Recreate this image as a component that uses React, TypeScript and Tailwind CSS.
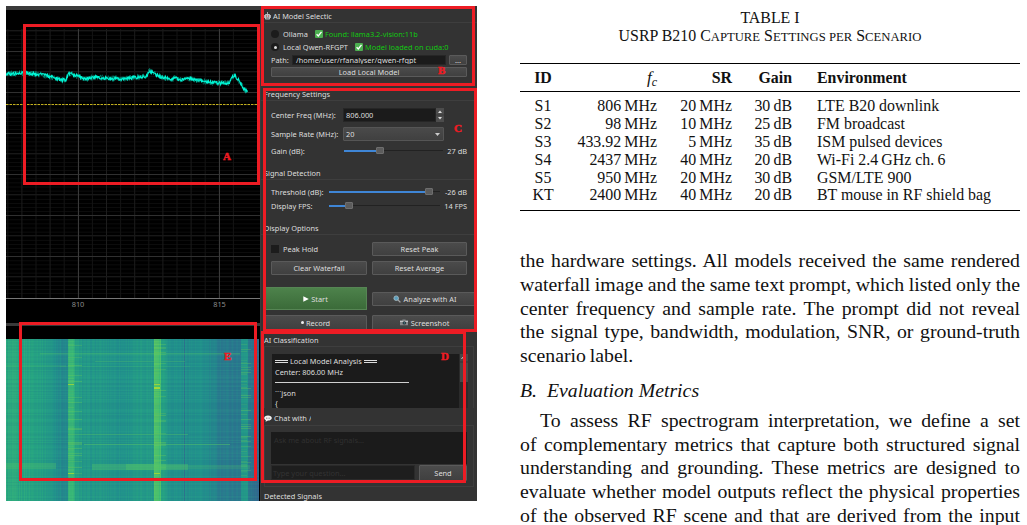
import type { ReactNode } from 'react';
import clsx from 'clsx';

const SCENARIOS = [
  { id: 'S1', fc: '806', sr: '20', gain: '30', env: 'LTE B20 downlink' },
  { id: 'S2', fc: '98', sr: '10', gain: '25', env: 'FM broadcast' },
  { id: 'S3', fc: '433.92', sr: '5', gain: '35', env: 'ISM pulsed devices' },
  { id: 'S4', fc: '2437', sr: '40', gain: '20', env: 'Wi-Fi 2.4\u2009GHz ch.\u20096' },
  { id: 'S5', fc: '950', sr: '20', gain: '30', env: 'GSM/LTE 900' },
  { id: 'KT', fc: '2400', sr: '40', gain: '20', env: 'BT mouse in RF shield bag' },
];

const HARDWARE_LINES = [
  'the hardware settings. All models received the same rendered',
  'waterfall image and the same text prompt, which listed only the',
  'center frequency and sample rate. The prompt did not reveal',
  'the signal type, bandwidth, modulation, SNR, or ground-truth',
  'scenario label.',
];

const METRIC_LINES = [
  'To assess RF spectrogram interpretation, we define a set',
  'of complementary metrics that capture both structured signal',
  'understanding and grounding. These metrics are designed to',
  'evaluate whether model outputs reflect the physical properties',
  'of the observed RF scene and that are derived from the input',
];

// repeatable noise, 0..1
function noise(n: number) {
  const s = Math.sin(n * 127.1 + 311.7) * 43758.5453;
  return s - Math.floor(s);
}

function lerp(points: number[][], x: number) {
  for (let i = 1; i < points.length; i++) {
    const [x0, y0] = points[i - 1];
    const [x1, y1] = points[i];
    if (x <= x1) return y0 + ((y1 - y0) * (x - x0)) / (x1 - x0);
  }
  return points[points.length - 1][1];
}

/* ---------- spectrum ---------- */

const TRACE = [
  [6, 74], [24, 73], [40, 74.5], [52, 77], [60, 80], [66, 80], [68, 74], [72, 74], [77, 76], [84, 79],
  [95, 77], [110, 78.5], [120, 79], [135, 77.5], [147, 76], [149, 71], [153, 71.5], [156, 75], [165, 78],
  [172, 79.5], [175, 77], [178, 80], [190, 78.5], [202, 81], [215, 83], [229, 83], [232, 77.5], [235, 76],
  [240, 82], [244, 89], [247.5, 92],
];

function tracePoints(step: number, amp: number, seed: number) {
  const pts: string[] = [];
  for (let x = 6; x <= 247.5; x += step) {
    const y = lerp(TRACE, x) + (noise(x * 3.7 + seed) - 0.5) * amp;
    pts.push(`${x.toFixed(1)},${y.toFixed(1)}`);
  }
  return pts.join(' ');
}

const range = (n: number) => Array.from({ length: n }, (_, i) => i);

function Spectrum() {
  return (
    <svg viewBox="6 10 254 313" className="block w-[254px] h-[313px] bg-black">
      {/* minor grid */}
      {range(65).map(i => (
        <rect key={i} x={6} y={30.8 + i * 4.1} width={254} height={0.8} fill="#101010" />
      ))}
      {range(17).map(i => (
        <rect key={i} x={7.3 + i * 14.1} y={29} width={1} height={269} fill={i % 2 ? '#1d1d1d' : '#151515'} />
      ))}
      {range(7).map(i => (
        <rect key={i} x={6} y={30 + i * 41} width={254} height={1} fill="#181818" />
      ))}
      {/* major grid */}
      {range(6).map(i => (
        <rect key={i} x={6} y={51 + i * 41} width={254} height={1} fill="#303030" />
      ))}
      <rect x={78} y={29} width={1} height={269} fill="#3a3a3a" />
      <rect x={219} y={29} width={1} height={269} fill="#3a3a3a" />
      <rect x={6} y={298} width={254} height={1} fill="#777" />
      <line x1={6} y1={104.5} x2={257} y2={104.5} stroke="#c4b11e" strokeWidth={1} strokeDasharray="2.5 1" />
      <polyline points={tracePoints(0.45, 6, 5)} fill="none" stroke="#078f78" strokeWidth={0.6} />
      <polyline points={tracePoints(0.5, 3.4, 1)} fill="none" stroke="#00f5d4" strokeWidth={1.1} />
      <text x={78} y={307} textAnchor="middle" className="font-['Noto_Sans'] text-[7.4px] fill-[#8c8c8c]">810</text>
      <text x={219.5} y={307} textAnchor="middle" className="font-['Noto_Sans'] text-[7.4px] fill-[#8c8c8c]">815</text>
    </svg>
  );
}

/* ---------- waterfall ---------- */

const LEVELS = [
  [6, 0.62], [35, 0.6], [48, 0.55], [60, 0.48], [67, 0.46], [68, 0.68], [74, 0.66], [74.5, 0.58], [81, 0.57],
  [82, 0.53], [100, 0.54], [122, 0.51], [140, 0.55], [153, 0.55], [154, 0.74], [160, 0.72], [160.5, 0.6],
  [166, 0.58], [167, 0.52], [183, 0.5], [190, 0.5], [204, 0.49], [220, 0.42], [240, 0.4], [241, 0.54],
  [247, 0.53], [248, 0.4], [255, 0.33], [259, 0.26],
];

const VIRIDIS = [
  [0.2, 59, 82, 139], [0.3, 49, 104, 142], [0.4, 42, 120, 142], [0.5, 33, 145, 140],
  [0.6, 38, 163, 130], [0.7, 62, 188, 116], [0.8, 122, 209, 81],
];

function viridis(v: number) {
  const ch = (k: number) => Math.round(lerp(VIRIDIS.map(s => [s[0], s[k]]), v));
  return `rgb(${ch(1)},${ch(2)},${ch(3)})`;
}

// broad bursts that span the capture
const BURSTS = [
  { x: 40, y: 353, w: 200, h: 1.5, o: 0.3 },
  { x: 95, y: 361, w: 90, h: 1, o: 0.3 },
  { x: 6, y: 365, w: 60, h: 2, o: 0.15 },
  { x: 60, y: 366, w: 130, h: 1, o: 0.15 },
  { x: 68, y: 434, w: 120, h: 1, o: 0.4 },
  { x: 84, y: 444, w: 146, h: 1, o: 0.5 },
  { x: 6, y: 463, w: 50, h: 6, o: 0.3 },
  { x: 92, y: 464, w: 96, h: 6, o: 0.35 },
  { x: 126, y: 464, w: 40, h: 6, o: 0.35 },
  { x: 160, y: 465, w: 90, h: 4, o: 0.2 },
];

const BANDS = [
  { x: 68, w: 6, tail: 14 },
  { x: 154, w: 6, tail: 12 },
  { x: 241, w: 6, tail: 10 },
];

function Waterfall() {
  return (
    <svg viewBox="6 339 253 162" className="block w-[253px] h-[162px]">
      {range(253).map(i => {
        const x = 6 + i;
        const v = x === 184 ? 0.36 : lerp(LEVELS, x) + (noise(i) - 0.5) * 0.05;
        return <rect key={i} x={x} y={339} width={1.1} height={162} fill={viridis(v)} />;
      })}
      {range(162).map(i => {
        const n = noise(i + 900);
        return <rect key={i} x={6} y={339 + i} width={253} height={1} fill={n > 0.5 ? '#3fd080' : '#1b4f80'} opacity={Math.abs(n - 0.5) * 0.17} />;
      })}
      {BANDS.map((b, k) =>
        range(140).map(i => {
          const n = noise(i * 3 + k * 50 + 11);
          if (n < 0.6) return null;
          return <rect key={`${k}-${i}`} x={b.x} y={341 + i} width={n > 0.85 ? b.tail : b.w} height={1} fill="#7ad151" opacity={(n - 0.55) * 0.7} />;
        })
      )}
      {BURSTS.map((b, i) => (
        <rect key={i} x={b.x} y={b.y} width={b.w} height={b.h} fill="#55c667" opacity={b.o} />
      ))}
      <rect x={154} y={387} width={6} height={2} fill="#b5de2b" opacity={0.8} />
      <rect x={68} y={384} width={6} height={1} fill="#b5de2b" opacity={0.7} />
      <rect x={154} y={384} width={6} height={1} fill="#b5de2b" opacity={0.7} />
      <rect x={68} y={473} width={6} height={1} fill="#b5de2b" opacity={0.7} />
      <rect x={154} y={473} width={6} height={1} fill="#b5de2b" opacity={0.7} />
    </svg>
  );
}

/* ---------- control panel ---------- */

function Title({ children, className }: { children: ReactNode; className: string }) {
  return <div className={clsx('flex items-center gap-[2px] pl-[3px] shrink-0', className)}>{children}</div>;
}

function Btn({ children, className }: { children: ReactNode; className?: string }) {
  return (
    <div className={clsx('flex items-center justify-center gap-[3px] border border-[#5a5a5a] bg-linear-to-b from-[#4b4b4b] to-[#404040] rounded-[1px] shrink-0', className)}>
      {children}
    </div>
  );
}

function SliderTrack({ fill, className }: { fill: string; className: string }) {
  return (
    <div className={clsx('flex items-center', className)}>
      <div className={clsx('h-[2px] bg-[#3f86d6]', fill)} />
      <div className="w-[8px] h-[7px] bg-[#5c5c5c] border border-[#6e6e6e] rounded-[1px]" />
      <div className="h-px flex-1 bg-[#222]" />
    </div>
  );
}

function CheckMark() {
  return (
    <svg viewBox="0 0 8 8" className="w-[8px] h-[8px] shrink-0">
      <rect width="8" height="8" rx="1" fill="#4caf50" />
      <path d="M1.6 4.2 3.3 6 6.5 1.8" fill="none" stroke="#fff" strokeWidth="1.3" />
    </svg>
  );
}

function Robot() {
  return (
    <svg viewBox="0 0 7 8" className="w-[7px] h-[8px] shrink-0">
      <path d="M3 0h1v2H3zM0 3h1v3H0zM6 3h1v3H6z" fill="#aaa" />
      <rect x="1" y="2" width="5" height="5.5" rx=".7" fill="#b9c0c4" />
      <path d="M2 3.4h1v1H2zM4 3.4h1v1H4z" fill="#b33" />
      <path d="M2 5.7h3v.7H2z" fill="#444" />
    </svg>
  );
}

function Magnifier() {
  return (
    <svg viewBox="0 0 8 8" className="w-[8px] h-[8px] shrink-0">
      <path d="m4.8 4.8 2.6 2.6" stroke="#a3a3a3" strokeWidth="1.3" />
      <circle cx="3.2" cy="3.2" r="2.3" fill="#5b9fbd" stroke="#a9bfc8" strokeWidth=".8" />
    </svg>
  );
}

function CameraIcon() {
  return (
    <svg viewBox="0 0 8 7" className="w-[8px] h-[7px] shrink-0">
      <path d="M0 1.2h2L2.6.4h2.8l.6.8h2v5H0z" fill="#85898b" />
      <path d="M0 2h8v1H0z" fill="#c2c6c8" />
      <circle cx="4.3" cy="3.9" r="1.7" fill="#222c31" />
      <circle cx="4.3" cy="3.9" r=".7" fill="#4f9dac" />
    </svg>
  );
}

function Bubble() {
  return (
    <svg viewBox="0 0 8 7" className="w-[8px] h-[7px] shrink-0">
      <path d="M4 .5c2.2 0 3.8 1 3.8 2.5S6.200 5.600 4 5.600L1.600 6.800 1.900 5.200C.8 4.700.2 4 .2 3 .2 1.500 1.800.5 4 .5Z" fill="#f4f4f4" />
      <path d="M2 2.700h.9v.8H2zM3.600 2.700h.9v.8h-.9zM5.200 2.700h.9v.8h-.9z" fill="#555" />
    </svg>
  );
}

function ControlPanel() {
  return (
    <div className="flex flex-col w-[216px] h-[495px] bg-[#333] text-[#dedede] font-['Noto_Sans',sans-serif] text-[7.4px] leading-[10px] whitespace-nowrap overflow-hidden">
      {/* model selection */}
      <Title className="h-[17px] pt-[3px] border-b border-[#3e3e3e]"><Robot />AI Model Selectic</Title>
      <div className="flex items-center h-[12px] mt-[5px] pl-[10px] shrink-0">
        <span className="w-[8px] h-[8px] rounded-full bg-[#1c1c1c]" />
        <span className="ml-[4px] w-[32px]">Ollama</span>
        <CheckMark />
        <span className="ml-[2px] text-[#12c812]">Found: llama3.2-vision:11b</span>
      </div>
      <div className="flex items-center h-[12px] mt-[1px] pl-[10px] shrink-0">
        <span className="w-[8px] h-[8px] rounded-full bg-[#1c1c1c] flex items-center justify-center">
          <span className="w-[3px] h-[3px] rounded-full bg-[#ddd]" />
        </span>
        <span className="ml-[4px] w-[72px]">Local Qwen-RFGPT</span>
        <CheckMark />
        <span className="ml-[2px] text-[#12c812]">Model loaded on cuda:0</span>
      </div>
      <div className="flex items-center h-[12px] mt-[1px] pl-[10px] shrink-0">
        <span className="w-[21px]">Path:</span>
        <div className="flex items-center w-[154px] h-[10px] pl-[3px] bg-[#1b1b1b] border border-[#262626] overflow-hidden">/home/user/rfanalyser/qwen-rfgpt</div>
        <Btn className="ml-[3px] w-[18px] h-[10px]">...</Btn>
      </div>
      <Btn className="mt-[1px] ml-[10px] w-[196px] h-[10px]">Load Local Model</Btn>

      {/* frequency */}
      <Title className="mt-[11px] h-[13px] border-b border-[#3e3e3e]">Frequency Settings</Title>
      <div className="flex items-center h-[14px] mt-[7px] pl-[10px] shrink-0">
        <span className="w-[72px]">Center Freq (MHz):</span>
        <div className="flex items-center w-[93px] h-[14px] pl-[2px] bg-[#1b1b1b] border border-[#262626]">806.000</div>
        <svg viewBox="0 0 8 14" className="w-[8px] h-[14px]">
          <rect width="8" height="14" fill="#4c4c4c" />
          <path d="M0 7h8" stroke="#333" strokeWidth=".7" />
          <path d="M2 5 4 2.500 6 5zM2 9l2 2.500L6 9z" fill="#ddd" />
        </svg>
      </div>
      <div className="flex items-center h-[14px] mt-[5px] pl-[10px] shrink-0">
        <span className="w-[72px]">Sample Rate (MHz):</span>
        <div className="flex items-center justify-between w-[101px] h-[14px] pl-[2px] pr-[3px] bg-linear-to-b from-[#4a4a4a] to-[#404040] border border-[#555] rounded-[1px]">
          20
          <svg viewBox="0 0 5 3" className="w-[5px] h-[3px]"><path d="M0 0h5L2.500 3z" fill="#ccc" /></svg>
        </div>
      </div>
      <div className="flex items-center h-[11px] mt-[4px] pl-[10px] pr-[10px] shrink-0">
        <span className="w-[73px]">Gain (dB):</span>
        <SliderTrack fill="w-[32px]" className="w-[99px]" />
        <span className="ml-auto">27 dB</span>
      </div>

      {/* detection */}
      <Title className="mt-[11px] h-[13px] border-b border-[#3e3e3e]">Signal Detection</Title>
      <div className="flex items-center h-[11px] mt-[6px] pl-[10px] pr-[10px] shrink-0">
        <span className="w-[58px]">Threshold (dB):</span>
        <SliderTrack fill="w-[96px]" className="w-[111px]" />
        <span className="ml-auto">-26 dB</span>
      </div>
      <div className="flex items-center h-[11px] mt-[3px] pl-[10px] pr-[10px] shrink-0">
        <span className="w-[58px]">Display FPS:</span>
        <SliderTrack fill="w-[16px]" className="w-[111px]" />
        <span className="ml-auto">14 FPS</span>
      </div>

      {/* display */}
      <Title className="mt-[10px] h-[14px] border-b border-[#3e3e3e]">Display Options</Title>
      <div className="flex items-center h-[14px] mt-[7px] pl-[10px] shrink-0">
        <span className="w-[8px] h-[8px] bg-[#1c1c1c]" />
        <span className="ml-[4px] w-[89px]">Peak Hold</span>
        <Btn className="w-[95px] h-[14px]">Reset Peak</Btn>
      </div>
      <div className="flex items-center h-[14px] mt-[5px] pl-[10px] gap-[5px] shrink-0">
        <Btn className="w-[96px] h-[14px]">Clear Waterfall</Btn>
        <Btn className="w-[95px] h-[14px]">Reset Average</Btn>
      </div>

      {/* actions */}
      <div className="flex items-center h-[23px] mt-[12px] pl-[3px] gap-[5px] shrink-0">
        <div className="flex items-center justify-center gap-[2px] w-[103px] h-[23px] bg-linear-to-b from-[#4d824b] to-[#3b6b39] border border-[#568554]">
          <svg viewBox="0 0 6 6" className="w-[6px] h-[6px]"><path d="M.3.3 5.800 3 .3 5.800z" fill="#fff" /></svg>
          Start
        </div>
        <Btn className="w-[105px] h-[14px]"><Magnifier />Analyze with AI</Btn>
      </div>
      <div className="flex items-center h-[15px] mt-[5px] pl-[3px] gap-[5px] shrink-0">
        <Btn className="w-[103px] h-[15px]"><span className="w-[3px] h-[3px] rounded-full bg-[#eee] -mr-[1px]" />Record</Btn>
        <Btn className="w-[105px] h-[15px]"><CameraIcon />Screenshot</Btn>
      </div>

      {/* classification log */}
      <Title className="mt-[3px] h-[13px]">AI Classification</Title>
      <div className="flex h-[62px] pt-[7px] pl-[7px] mx-[3px] border border-b-0 border-[#3e3e3e] shrink-0">
        <div className="w-[187px] h-[54px] px-[3px] pt-[2px] bg-[#1b1b1b] leading-[10.5px] overflow-hidden">
          <div className="flex items-center gap-[2px]">
            <span className="w-[13px] h-[3px] border-y border-[#ddd]" />
            Local Model Analysis
            <span className="w-[13px] h-[3px] border-y border-[#ddd]" />
          </div>
          <div>Center: 806.00 MHz</div>
          <div className="h-[10.500px] flex items-center"><span className="w-[134px] h-px bg-[#d0d0d0]" /></div>
          <div>```json</div>
          <div>{'{'}</div>
        </div>
        <div className="w-[9px] h-[54px] bg-[#2b2b2b]">
          <svg viewBox="0 0 9 28" className="block w-[9px] h-[28px]">
            <rect x="1" width="8" height="28" fill="#484848" />
            <path d="M2.500 5 4.500 2.500 6.500 5" fill="none" stroke="#ccc" />
            <path d="M1 8h8" stroke="#333" />
          </svg>
        </div>
      </div>

      {/* chat */}
      <Title className="mt-[3px] h-[14px]"><Bubble />Chat with <span className="w-[2px] overflow-hidden">/</span></Title>
      <div className="h-[62px] pt-[6px] pl-[6px] mx-[3px] border border-[#3e3e3e] shrink-0">
        <div className="w-[196px] h-[32px] pl-[3px] pt-[3px] bg-[#1b1b1b] text-[#303030]">Ask me about RF signals...</div>
        <div className="flex items-center h-[17px]">
          <div className="flex items-center w-[144px] h-[15px] pl-[1px] bg-[#1e1e1e] text-[#333] border border-[#2a2a2a]">Type your question...</div>
          <Btn className="ml-[4px] w-[48px] h-[16px]">Send</Btn>
        </div>
      </div>
      <Title className="mt-[3px] h-[12px]">Detected Signals</Title>
    </div>
  );
}

/* ---------- red callouts ---------- */

function Callout({ label, box, at }: { label: string; box: string; at: string }) {
  return (
    <>
      <div className={clsx('absolute border-[3px] border-[#ed1c24]', box)} />
      <span className={clsx("absolute font-['Liberation_Serif',serif] font-bold text-[11px] leading-[12px] text-[#ed1c24] [-webkit-text-stroke:0.5px_#ed1c24]", at)}>{label}</span>
    </>
  );
}

function Analyzer() {
  return (
    <div className="relative flex w-[471px] h-[495px] mt-[6px] ml-[6px] bg-[#333] shrink-0">
      <div className="w-[255px] pr-[1px] bg-[#3a3a3a]">
        <div className="h-[4px] bg-[#3a3a3a]" />
        <Spectrum />
        <div className="h-[3px] bg-[#3a3a3a]" />
        <div className="h-[13px] bg-black" />
        <div className="bg-black"><Waterfall /></div>
      </div>
      <ControlPanel />
      <Callout label="A" box="left-[17px] top-[18px] w-[237px] h-[161px]" at="left-[217px] top-[144px]" />
      <Callout label="B" box="left-[255px] top-0 w-[214px] h-[80px]" at="left-[432px] top-[58px]" />
      <Callout label="C" box="left-[257px] top-[82px] w-[214px] h-[244px]" at="left-[448px] top-[116px]" />
      <Callout label="D" box="left-[255px] top-[325px] w-[205px] h-[152px]" at="left-[435px] top-[344px]" />
      <Callout label="E" box="left-[13px] top-[316px] w-[238px] h-[159px]" at="left-[218px] top-[344px]" />
    </div>
  );
}

/* ---------- paper column ---------- */

function Justified({ lines, lastRagged }: { lines: string[]; lastRagged?: boolean }) {
  return (
    <>
      {lines.map((line, i) => (
        <div
          key={line}
          className={clsx(
            'h-[23.8px] [word-spacing:-1px]',
            !(lastRagged && i === lines.length - 1) && '[text-align-last:justify]',
            !lastRagged && i === 0 && 'pl-[20px]',
          )}
        >
          {line}
        </div>
      ))}
    </>
  );
}

function Small({ children }: { children: ReactNode }) {
  return <span className="text-[12.7px]">{children}</span>;
}

const COLS = 'grid grid-cols-[46px_91px_75px_60px_1fr]';

function Paper() {
  return (
    <div className="w-[500px] ml-[43px] shrink-0 font-['Liberation_Serif',serif] text-[#111] text-[19.8px] leading-[23.8px] whitespace-nowrap">
      <div className="pt-[9px] text-[15.9px] leading-[18px] text-center">
        <div>TABLE I</div>
        <div>
          USRP B210 C<Small>APTURE</Small> S<Small>ETTINGS PER</Small> S<Small>CENARIO</Small>
        </div>
      </div>
      <div className="mt-[17px] border-y-[1.5px] border-black text-[15.9px] leading-[17.9px]">
        <div className={clsx(COLS, 'h-[28px] items-center border-b border-black font-bold text-right')}>
          <span className="text-center">ID</span>
          <span className="font-normal italic text-[17px]">f<sub className="text-[12px]">c</sub></span>
          <span>SR</span>
          <span>Gain</span>
          <span className="pl-[25px] text-left">Environment</span>
        </div>
        <div className="pt-[5px] h-[118px]">
          {SCENARIOS.map(s => (
            <div key={s.id} className={clsx(COLS, 'h-[17.9px] text-right')}>
              <span className="text-center">{s.id}</span>
              <span>{s.fc}&#8201;MHz</span>
              <span>{s.sr}&#8201;MHz</span>
              <span>{s.gain}&#8201;dB</span>
              <span className="pl-[25px] text-left">{s.env}</span>
            </div>
          ))}
        </div>
      </div>
      <div className="mt-[38px]">
        <Justified lines={HARDWARE_LINES} lastRagged />
      </div>
      <h2 className="mt-[11px] italic">B.&nbsp; Evaluation Metrics</h2>
      <div className="mt-[6px]">
        <Justified lines={METRIC_LINES} />
      </div>
    </div>
  );
}

export default function App() {
  return (
    <div className="flex w-[1027px] h-[525px] bg-white overflow-hidden">
      <Analyzer />
      <Paper />
    </div>
  );
}
